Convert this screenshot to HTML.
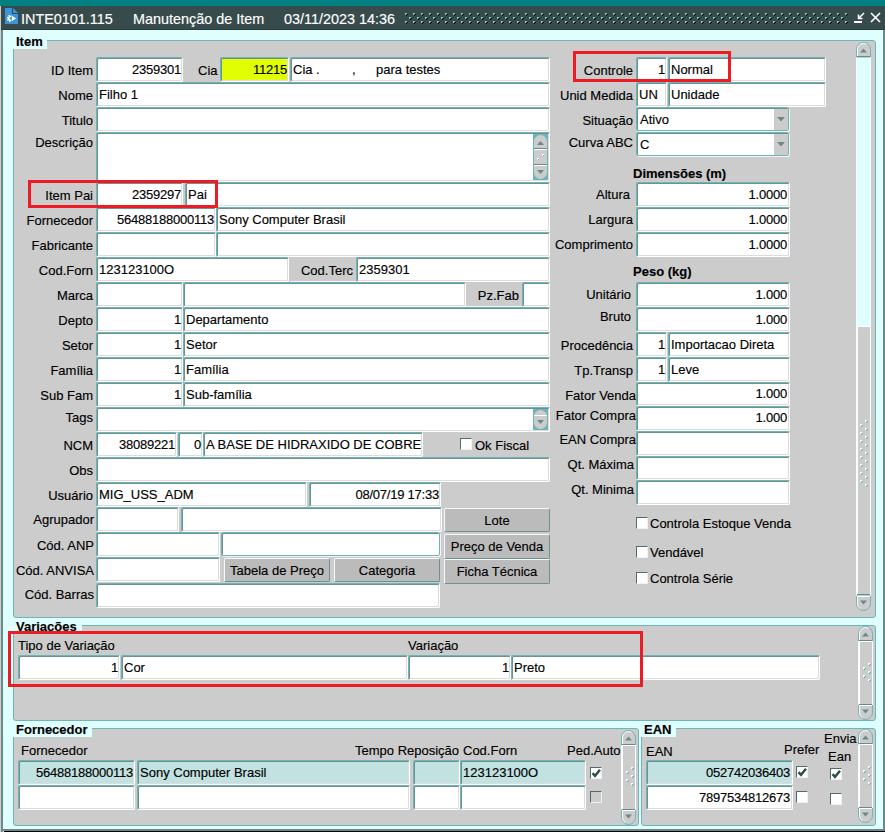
<!DOCTYPE html><html><head><meta charset="utf-8"><title>INTE0101.115</title><style>
html,body{margin:0;padding:0;}
body{width:885px;height:832px;overflow:hidden;background:#dfffff;font-family:"Liberation Sans",sans-serif;font-size:13px;color:#000;position:relative;-webkit-text-stroke:0.15px #000;}
div,span{box-sizing:border-box;}
.a{position:absolute;}
.f{position:absolute;background:#fff;border-top:1px solid #70b5b5;border-left:1px solid #70b5b5;border-right:1px solid #fff;border-bottom:1px solid #fff;border-radius:2px;height:25px;line-height:23px;padding:0 1px 0 2px;white-space:nowrap;overflow:hidden;box-shadow:inset 1px 1px 0 #6a9292, inset -1px -1px 0 #dcdcdc;}
.fb{border-right:1px solid #70b5b5;border-bottom:1px solid #70b5b5;box-shadow:inset 1px 1px 0 #6a9292, 1px 1px 0 #f4f4f4;}
.r{text-align:right;letter-spacing:-0.23px;}
.l{position:absolute;white-space:nowrap;line-height:16px;text-align:right;}
.ll{position:absolute;white-space:nowrap;line-height:16px;}
.b{font-weight:bold;}
.panel{position:absolute;background:#cccccc;border:1px solid #70b5b5;border-radius:3px;}
.plab{position:absolute;background:#dfffff;font-weight:bold;line-height:16px;padding:0 3px 0 3px;white-space:nowrap;}
.btn{position:absolute;background:#bbbbbb;border-top:1px solid #f8f8f8;border-left:1px solid #f8f8f8;border-right:1px solid #6a9292;border-bottom:1px solid #6a9292;border-radius:2px;height:24px;line-height:24px;text-align:center;white-space:nowrap;}
.cb{position:absolute;width:12px;height:12px;background:#fff;border:1px solid #4f6b6b;border-right-color:#f0f0f0;border-bottom-color:#f0f0f0;}
.red{position:absolute;border:3px solid #ed1c24;}
.sv{position:absolute;}
</style></head><body>
<div class="a" style="left:0;top:0;width:885px;height:6px;background:#008080"></div>
<div class="a" style="left:0;top:6px;width:885px;height:24px;background:#374b4c;border-bottom:1px solid #2c3c3c"></div>
<div class="a" style="left:0;top:6px;width:1px;height:826px;background:#d0d0d0"></div>
<div class="a" style="left:1px;top:30px;width:2px;height:802px;background:#6a8a8a"></div>
<div class="a" style="left:883px;top:30px;width:2px;height:802px;background:#6a8a8a"></div>
<div class="a" style="left:1px;top:829px;width:884px;height:2px;background:#6a8a8a"></div>
<div class="a" style="left:4px;top:831px;width:881px;height:1px;background:#000"></div>
<div class="a" style="left:21px;top:10px;font-size:14.4px;line-height:18px;color:#fff;-webkit-text-stroke:0.15px #fff;white-space:pre">INTE0101.115</div>
<div class="a" style="left:133px;top:10px;font-size:14.4px;line-height:18px;color:#fff;-webkit-text-stroke:0.15px #fff;white-space:pre">Manutenção de Item</div>
<div class="a" style="left:284px;top:10px;font-size:14.4px;line-height:18px;color:#fff;-webkit-text-stroke:0.15px #fff;white-space:pre">03/11/2023 14:36</div>
<svg class="sv" style="left:0;top:6px" width="885" height="24" viewBox="0 6 885 24" shape-rendering="crispEdges"><defs><pattern id="tp" x="405" y="13" width="8" height="8" patternUnits="userSpaceOnUse"><rect x="0" y="0" width="2" height="2" fill="#7ccccc"/><rect x="2" y="1" width="1" height="1" fill="#000"/><rect x="1" y="2" width="1" height="1" fill="#000"/><rect x="1" y="1" width="1" height="1" fill="#2a4a4a"/><rect x="4" y="4" width="2" height="2" fill="#7ccccc"/><rect x="6" y="5" width="1" height="1" fill="#000"/><rect x="5" y="6" width="1" height="1" fill="#000"/><rect x="5" y="5" width="1" height="1" fill="#2a4a4a"/></pattern></defs><rect x="405" y="13" width="443" height="11" fill="url(#tp)"/><g shape-rendering="auto"><defs><clipPath id="hg"><rect x="5" y="13" width="6.3" height="11"/></clipPath></defs><path d="M5 8H12V14H18V24H5z" fill="#3a96d8"/><path d="M13 8L18 13H13z" fill="#3a96d8"/><g clip-path="url(#hg)"><circle cx="10.6" cy="18.4" r="3.1" fill="none" stroke="#fff" stroke-width="1.4" stroke-dasharray="1.25 1.18"/><circle cx="10.6" cy="18.4" r="1.9" fill="none" stroke="#fff" stroke-width="1.5"/></g><path d="M12 15.8L16 18.4L12 21z" fill="#fff"/></g><g shape-rendering="auto" stroke="#fff" stroke-width="1.5" fill="none"><path d="M864 13L858.5 18.5M858.5 14.5V18.5H862.5"/><path d="M854 22H862" stroke-width="2"/><path d="M871 13L880 22M880 13L871 22" stroke-width="1.6"/></g></svg>
<div class="panel" style="left:13px;top:40px;width:863px;height:578px"></div>
<div class="plab" style="left:13px;top:33px;height:16px;width:34px;line-height:18px">Item</div>
<div class="l" style="right:792px;top:63px">ID Item</div>
<div class="f r" style="left:96px;top:57px;width:87px;height:25px;">2359301</div>
<div class="ll" style="left:198px;top:63px">Cia</div>
<div class="f r" style="left:220px;top:57px;width:69px;height:25px;background:#e1ff00;">11215</div>
<div class="f" style="left:290px;top:57px;width:260px;height:25px;"><span class="a" style="left:2px">Cia .</span><span class="a" style="left:61px">,</span><span class="a" style="left:85px">para testes</span></div>
<div class="l" style="right:792px;top:88px">Nome</div>
<div class="f" style="left:96px;top:82px;width:454px;height:25px;">Filho 1</div>
<div class="l" style="right:792px;top:113px">Titulo</div>
<div class="f" style="left:96px;top:107px;width:454px;height:25px;"></div>
<div class="l" style="right:792px;top:135px">Descrição</div>
<div class="f" style="left:96px;top:132px;width:454px;height:50px;"></div>
<div class="l" style="right:792px;top:188px">Item Pai</div>
<div class="f r" style="left:96px;top:182px;width:87px;height:25px;">2359297</div>
<div class="f" style="left:185px;top:182px;width:365px;height:25px;">Pai</div>
<div class="l" style="right:792px;top:213px">Fornecedor</div>
<div class="f r" style="left:96px;top:207px;width:120px;height:25px;">56488188000113</div>
<div class="f" style="left:216px;top:207px;width:334px;height:25px;">Sony Computer Brasil</div>
<div class="l" style="right:792px;top:238px">Fabricante</div>
<div class="f" style="left:96px;top:232px;width:120px;height:25px;"></div>
<div class="f" style="left:216px;top:232px;width:334px;height:25px;"></div>
<div class="l" style="right:792px;top:263px">Cod.Forn</div>
<div class="f" style="left:96px;top:257px;width:193px;height:25px;">123123100O</div>
<div class="a" style="left:290px;top:258px;width:66px;height:24px;border-bottom:1px solid #f4f4f4"></div>
<div class="l" style="right:532px;top:263px">Cod.Terc</div>
<div class="f" style="left:356px;top:257px;width:194px;height:25px;">2359301</div>
<div class="l" style="right:792px;top:288px">Marca</div>
<div class="f" style="left:96px;top:282px;width:87px;height:25px;"></div>
<div class="f" style="left:183px;top:282px;width:283px;height:25px;"></div>
<div class="a" style="left:466px;top:283px;width:56px;height:24px;border-bottom:1px solid #f4f4f4"></div>
<div class="l" style="right:366px;top:288px">Pz.Fab</div>
<div class="f" style="left:522px;top:282px;width:28px;height:25px;"></div>
<div class="l" style="right:792px;top:313px">Depto</div>
<div class="f r" style="left:96px;top:307px;width:87px;height:25px;">1</div>
<div class="f" style="left:183px;top:307px;width:367px;height:25px;">Departamento</div>
<div class="l" style="right:792px;top:338px">Setor</div>
<div class="f r" style="left:96px;top:332px;width:87px;height:25px;">1</div>
<div class="f" style="left:183px;top:332px;width:367px;height:25px;">Setor</div>
<div class="l" style="right:792px;top:363px">Família</div>
<div class="f r" style="left:96px;top:357px;width:87px;height:25px;">1</div>
<div class="f" style="left:183px;top:357px;width:367px;height:25px;">Família</div>
<div class="l" style="right:792px;top:388px">Sub Fam</div>
<div class="f r" style="left:96px;top:382px;width:87px;height:25px;">1</div>
<div class="f" style="left:183px;top:382px;width:367px;height:25px;">Sub-família</div>
<div class="l" style="right:792px;top:410px">Tags</div>
<div class="f" style="left:96px;top:407px;width:454px;height:25px;"></div>
<div class="l" style="right:792px;top:438px">NCM</div>
<div class="f r" style="left:96px;top:432px;width:81px;height:25px;">38089221</div>
<div class="f r" style="left:178px;top:432px;width:25px;height:25px;">0</div>
<div class="f" style="left:203px;top:432px;width:220px;height:25px;">A BASE DE HIDRAXIDO DE COBRE</div>
<div class="cb" style="left:460px;top:438px"></div>
<div class="ll" style="left:475px;top:438px">Ok Fiscal</div>
<div class="l" style="right:792px;top:463px">Obs</div>
<div class="f" style="left:96px;top:457px;width:454px;height:25px;"></div>
<div class="l" style="right:792px;top:488px">Usuário</div>
<div class="f" style="left:96px;top:482px;width:211px;height:25px;">MIG_USS_ADM</div>
<div class="f r" style="left:309px;top:482px;width:132px;height:25px;">08/07/19 17:33</div>
<div class="l" style="right:791px;top:512px">Agrupador</div>
<div class="f" style="left:96px;top:507px;width:83px;height:25px;"></div>
<div class="f" style="left:181px;top:507px;width:261px;height:25px;"></div>
<div class="l" style="right:791px;top:538px">Cód. ANP</div>
<div class="f" style="left:96px;top:532px;width:124px;height:25px;"></div>
<div class="f fb" style="left:221px;top:532px;width:219px;height:24px;"></div>
<div class="l" style="right:791px;top:563px">Cód. ANVISA</div>
<div class="f" style="left:96px;top:557px;width:124px;height:25px;"></div>
<div class="l" style="right:791px;top:587px">Cód. Barras</div>
<div class="f" style="left:96px;top:583px;width:344px;height:25px;"></div>
<div class="btn" style="left:444px;top:508px;width:106px;height:24px;line-height:24px">Lote</div>
<div class="btn" style="left:444px;top:534px;width:106px;height:25px;line-height:23px">Preço de Venda</div>
<div class="btn" style="left:444px;top:559px;width:106px;height:25px;line-height:23px">Ficha Técnica</div>
<div class="btn" style="left:224px;top:558px;width:106px;height:24px;line-height:24px">Tabela de Preço</div>
<div class="btn" style="left:334px;top:558px;width:106px;height:24px;line-height:24px">Categoria</div>
<svg class="sv" style="left:533px;top:134px" width="15" height="46" viewBox="0 0 15 46"><rect width="15" height="46" fill="#70b5b5"/><rect x="1" y="1" width="13" height="44" rx="6.5" fill="#cccccc"/><rect x="1" y="14" width="13" height="1" fill="#6a8a8a"/><rect x="1" y="15" width="13" height="1" fill="#fff"/><rect x="1" y="30" width="13" height="1" fill="#6a8a8a"/><rect x="1" y="31" width="13" height="1" fill="#fff"/><path d="M4 11h7L7.5 7z" fill="#6a8a8a"/><path d="M4 36h7L7.5 40z" fill="#6a8a8a"/><rect x="9" y="20" width="2" height="2" fill="#fff"/><rect x="10" y="21" width="1" height="1" fill="#5fa8a8"/><rect x="4" y="24" width="2" height="2" fill="#fff"/><rect x="5" y="25" width="1" height="1" fill="#5fa8a8"/></svg>
<svg class="sv" style="left:533px;top:409px" width="15" height="21" viewBox="0 0 15 21"><rect width="15" height="21" fill="#70b5b5"/><rect x="1" y="1" width="13" height="19" rx="6.5" fill="#cccccc"/><rect x="1" y="6" width="13" height="1" fill="#fff"/><path d="M4 11h7L7.5 15z" fill="#6a8a8a"/></svg>
<div class="l" style="right:252px;top:63px">Controle</div>
<div class="f r" style="left:636px;top:57px;width:31px;height:25px;">1</div>
<div class="f" style="left:668px;top:57px;width:158px;height:25px;">Normal</div>
<div class="l" style="right:252px;top:88px">Unid Medida</div>
<div class="f" style="left:636px;top:82px;width:31px;height:25px;">UN</div>
<div class="f" style="left:668px;top:82px;width:158px;height:25px;">Unidade</div>
<div class="l" style="right:252px;top:113px">Situação</div>
<div class="f fb" style="left:636px;top:107px;width:153px;height:24px;"><span style="position:relative;top:0px;left:1px">Ativo</span></div>
<svg class="sv" style="left:774px;top:109px" width="14" height="21" viewBox="0 0 14 21"><rect width="14" height="21" fill="#cccccc"/><path d="M3 8h8L7 12.5z" fill="#6a8a8a"/></svg>
<div class="l" style="right:252px;top:135px">Curva ABC</div>
<div class="f fb" style="left:636px;top:132px;width:153px;height:24px;"><span style="position:relative;top:0px;left:1px">C</span></div>
<svg class="sv" style="left:774px;top:134px" width="14" height="21" viewBox="0 0 14 21"><rect width="14" height="21" fill="#cccccc"/><path d="M3 8h8L7 12.5z" fill="#6a8a8a"/></svg>
<div class="ll b" style="left:633px;top:166px">Dimensões (m)</div>
<div class="l" style="right:255px;top:187px">Altura</div>
<div class="f r" style="left:636px;top:182px;width:154px;height:25px;padding-right:2px;">1.0000</div>
<div class="l" style="right:252px;top:212px">Largura</div>
<div class="f r" style="left:636px;top:207px;width:154px;height:25px;padding-right:2px;">1.0000</div>
<div class="l" style="right:252px;top:237px">Comprimento</div>
<div class="f r" style="left:636px;top:232px;width:154px;height:25px;padding-right:2px;">1.0000</div>
<div class="ll b" style="left:633px;top:264px">Peso (kg)</div>
<div class="l" style="right:254px;top:287px">Unitário</div>
<div class="f r" style="left:636px;top:282px;width:154px;height:25px;padding-right:2px;">1.000</div>
<div class="l" style="right:254px;top:309px">Bruto</div>
<div class="f r" style="left:636px;top:307px;width:154px;height:25px;padding-right:2px;">1.000</div>
<div class="l" style="right:252px;top:338px">Procedência</div>
<div class="f r" style="left:636px;top:332px;width:31px;height:25px;">1</div>
<div class="f" style="left:668px;top:332px;width:122px;height:25px;">Importacao Direta</div>
<div class="l" style="right:252px;top:363px">Tp.Transp</div>
<div class="f r" style="left:636px;top:357px;width:31px;height:25px;">1</div>
<div class="f" style="left:668px;top:357px;width:122px;height:25px;">Leve</div>
<div class="l" style="right:249px;top:388px">Fator Venda</div>
<div class="f r" style="left:636px;top:382px;width:154px;height:24px;padding-right:2px;line-height:21px;">1.000</div>
<div class="l" style="right:249px;top:408px">Fator Compra</div>
<div class="f r" style="left:636px;top:406px;width:154px;height:25px;padding-right:2px;line-height:21px;">1.000</div>
<div class="l" style="right:249px;top:432px">EAN Compra</div>
<div class="f" style="left:636px;top:431px;width:154px;height:25px;"></div>
<div class="l" style="right:251px;top:457px">Qt. Máxima</div>
<div class="f" style="left:636px;top:456px;width:154px;height:24px;"></div>
<div class="l" style="right:251px;top:482px">Qt. Minima</div>
<div class="f" style="left:636px;top:480px;width:154px;height:25px;"></div>
<div class="cb" style="left:636px;top:517px"></div>
<div class="ll" style="left:650px;top:516px">Controla Estoque Venda</div>
<div class="cb" style="left:636px;top:546px"></div>
<div class="ll" style="left:650px;top:545px">Vendável</div>
<div class="cb" style="left:636px;top:572px"></div>
<div class="ll" style="left:650px;top:571px">Controla Série</div>
<svg class="sv" style="left:856px;top:42px" width="16" height="569" viewBox="0 0 16 569"><rect x="0" y="8" width="15" height="553" fill="#dfffff"/><rect x="0" y="8" width="1" height="553" fill="#f4ffff"/><rect x="14" y="8" width="1" height="553" fill="#f4ffff"/><path d="M0.5 15V7.5a7 7 0 0 1 14 0V15z" fill="#cccccc" stroke="#70b5b5" stroke-width="1"/><path d="M1.5 14V7.5a6 6 0 0 1 9-5.2" fill="none" stroke="#fff" stroke-width="1"/><rect x="1" y="14" width="13" height="1" fill="#6a8a8a"/><path d="M4 10.5h7L7.5 6.5z" fill="#6a8a8a"/><path d="M0.5 554V561.5a7 7 0 0 0 14 0V554z" fill="#cccccc" stroke="#70b5b5" stroke-width="1"/><path d="M1.5 555V561.5a6 6 0 0 0 3 5.2" fill="none" stroke="#fff" stroke-width="1"/><rect x="1" y="554" width="13" height="1" fill="#fff"/><path d="M4 558.5h7L7.5 562.5z" fill="#6a8a8a"/><rect x="1" y="284" width="14" height="269" fill="#cccccc"/><rect x="1" y="284" width="13" height="1" fill="#fff"/><rect x="1" y="284" width="1" height="269" fill="#fff"/><rect x="1" y="552" width="14" height="1" fill="#6a8a8a"/><rect x="14" y="284" width="1" height="269" fill="#f4ffff"/><rect x="9" y="378" width="2" height="2" fill="#fff"/><rect x="11" y="379" width="1" height="1" fill="#5fb0b0"/><rect x="10" y="380" width="1" height="1" fill="#5fb0b0"/><rect x="10" y="379" width="1" height="1" fill="#b0d8d8"/><rect x="9" y="386" width="2" height="2" fill="#fff"/><rect x="11" y="387" width="1" height="1" fill="#5fb0b0"/><rect x="10" y="388" width="1" height="1" fill="#5fb0b0"/><rect x="10" y="387" width="1" height="1" fill="#b0d8d8"/><rect x="9" y="394" width="2" height="2" fill="#fff"/><rect x="11" y="395" width="1" height="1" fill="#5fb0b0"/><rect x="10" y="396" width="1" height="1" fill="#5fb0b0"/><rect x="10" y="395" width="1" height="1" fill="#b0d8d8"/><rect x="9" y="402" width="2" height="2" fill="#fff"/><rect x="11" y="403" width="1" height="1" fill="#5fb0b0"/><rect x="10" y="404" width="1" height="1" fill="#5fb0b0"/><rect x="10" y="403" width="1" height="1" fill="#b0d8d8"/><rect x="9" y="410" width="2" height="2" fill="#fff"/><rect x="11" y="411" width="1" height="1" fill="#5fb0b0"/><rect x="10" y="412" width="1" height="1" fill="#5fb0b0"/><rect x="10" y="411" width="1" height="1" fill="#b0d8d8"/><rect x="9" y="418" width="2" height="2" fill="#fff"/><rect x="11" y="419" width="1" height="1" fill="#5fb0b0"/><rect x="10" y="420" width="1" height="1" fill="#5fb0b0"/><rect x="10" y="419" width="1" height="1" fill="#b0d8d8"/><rect x="9" y="426" width="2" height="2" fill="#fff"/><rect x="11" y="427" width="1" height="1" fill="#5fb0b0"/><rect x="10" y="428" width="1" height="1" fill="#5fb0b0"/><rect x="10" y="427" width="1" height="1" fill="#b0d8d8"/><rect x="9" y="434" width="2" height="2" fill="#fff"/><rect x="11" y="435" width="1" height="1" fill="#5fb0b0"/><rect x="10" y="436" width="1" height="1" fill="#5fb0b0"/><rect x="10" y="435" width="1" height="1" fill="#b0d8d8"/><rect x="9" y="442" width="2" height="2" fill="#fff"/><rect x="11" y="443" width="1" height="1" fill="#5fb0b0"/><rect x="10" y="444" width="1" height="1" fill="#5fb0b0"/><rect x="10" y="443" width="1" height="1" fill="#b0d8d8"/><rect x="4" y="382" width="2" height="2" fill="#fff"/><rect x="6" y="383" width="1" height="1" fill="#5fb0b0"/><rect x="5" y="384" width="1" height="1" fill="#5fb0b0"/><rect x="5" y="383" width="1" height="1" fill="#b0d8d8"/><rect x="4" y="390" width="2" height="2" fill="#fff"/><rect x="6" y="391" width="1" height="1" fill="#5fb0b0"/><rect x="5" y="392" width="1" height="1" fill="#5fb0b0"/><rect x="5" y="391" width="1" height="1" fill="#b0d8d8"/><rect x="4" y="398" width="2" height="2" fill="#fff"/><rect x="6" y="399" width="1" height="1" fill="#5fb0b0"/><rect x="5" y="400" width="1" height="1" fill="#5fb0b0"/><rect x="5" y="399" width="1" height="1" fill="#b0d8d8"/><rect x="4" y="406" width="2" height="2" fill="#fff"/><rect x="6" y="407" width="1" height="1" fill="#5fb0b0"/><rect x="5" y="408" width="1" height="1" fill="#5fb0b0"/><rect x="5" y="407" width="1" height="1" fill="#b0d8d8"/><rect x="4" y="414" width="2" height="2" fill="#fff"/><rect x="6" y="415" width="1" height="1" fill="#5fb0b0"/><rect x="5" y="416" width="1" height="1" fill="#5fb0b0"/><rect x="5" y="415" width="1" height="1" fill="#b0d8d8"/><rect x="4" y="422" width="2" height="2" fill="#fff"/><rect x="6" y="423" width="1" height="1" fill="#5fb0b0"/><rect x="5" y="424" width="1" height="1" fill="#5fb0b0"/><rect x="5" y="423" width="1" height="1" fill="#b0d8d8"/><rect x="4" y="430" width="2" height="2" fill="#fff"/><rect x="6" y="431" width="1" height="1" fill="#5fb0b0"/><rect x="5" y="432" width="1" height="1" fill="#5fb0b0"/><rect x="5" y="431" width="1" height="1" fill="#b0d8d8"/><rect x="4" y="438" width="2" height="2" fill="#fff"/><rect x="6" y="439" width="1" height="1" fill="#5fb0b0"/><rect x="5" y="440" width="1" height="1" fill="#5fb0b0"/><rect x="5" y="439" width="1" height="1" fill="#b0d8d8"/></svg>
<div class="panel" style="left:13px;top:625px;width:863px;height:96px"></div>
<div class="plab" style="left:13px;top:619px;height:15px;width:69px">Variações</div>
<div class="ll" style="left:18px;top:638px">Tipo de Variação</div>
<div class="ll" style="left:408px;top:638px">Variação</div>
<div class="f r" style="left:18px;top:655px;width:102px;height:25px;">1</div>
<div class="f" style="left:121px;top:655px;width:287px;height:25px;">Cor</div>
<div class="f r" style="left:408px;top:655px;width:103px;height:25px;">1</div>
<div class="f" style="left:511px;top:655px;width:309px;height:25px;">Preto</div>
<svg class="sv" style="left:858px;top:626px" width="16" height="94" viewBox="0 0 16 94"><rect x="0" y="8" width="15" height="78" fill="#dfffff"/><rect x="0" y="8" width="1" height="78" fill="#f4ffff"/><rect x="14" y="8" width="1" height="78" fill="#f4ffff"/><path d="M0.5 15V7.5a7 7 0 0 1 14 0V15z" fill="#cccccc" stroke="#70b5b5" stroke-width="1"/><path d="M1.5 14V7.5a6 6 0 0 1 9-5.2" fill="none" stroke="#fff" stroke-width="1"/><rect x="1" y="14" width="13" height="1" fill="#6a8a8a"/><path d="M4 10.5h7L7.5 6.5z" fill="#6a8a8a"/><path d="M0.5 79V86.5a7 7 0 0 0 14 0V79z" fill="#cccccc" stroke="#70b5b5" stroke-width="1"/><path d="M1.5 80V86.5a6 6 0 0 0 3 5.2" fill="none" stroke="#fff" stroke-width="1"/><rect x="1" y="79" width="13" height="1" fill="#fff"/><path d="M4 83.5h7L7.5 87.5z" fill="#6a8a8a"/><rect x="1" y="15" width="14" height="64" fill="#cccccc"/><rect x="1" y="15" width="13" height="1" fill="#fff"/><rect x="1" y="15" width="1" height="64" fill="#fff"/><rect x="1" y="78" width="14" height="1" fill="#6a8a8a"/><rect x="14" y="15" width="1" height="64" fill="#f4ffff"/><rect x="10" y="37" width="2" height="2" fill="#fff"/><rect x="12" y="38" width="1" height="1" fill="#5fb0b0"/><rect x="11" y="39" width="1" height="1" fill="#5fb0b0"/><rect x="11" y="38" width="1" height="1" fill="#b0d8d8"/><rect x="5" y="41" width="2" height="2" fill="#fff"/><rect x="7" y="42" width="1" height="1" fill="#5fb0b0"/><rect x="6" y="43" width="1" height="1" fill="#5fb0b0"/><rect x="6" y="42" width="1" height="1" fill="#b0d8d8"/><rect x="10" y="45" width="2" height="2" fill="#fff"/><rect x="12" y="46" width="1" height="1" fill="#5fb0b0"/><rect x="11" y="47" width="1" height="1" fill="#5fb0b0"/><rect x="11" y="46" width="1" height="1" fill="#b0d8d8"/><rect x="5" y="49" width="2" height="2" fill="#fff"/><rect x="7" y="50" width="1" height="1" fill="#5fb0b0"/><rect x="6" y="51" width="1" height="1" fill="#5fb0b0"/><rect x="6" y="50" width="1" height="1" fill="#b0d8d8"/><rect x="10" y="53" width="2" height="2" fill="#fff"/><rect x="12" y="54" width="1" height="1" fill="#5fb0b0"/><rect x="11" y="55" width="1" height="1" fill="#5fb0b0"/><rect x="11" y="54" width="1" height="1" fill="#b0d8d8"/></svg>
<div class="panel" style="left:13px;top:728px;width:626px;height:98px"></div>
<div class="plab" style="left:13px;top:722px;height:15px;width:79px">Fornecedor</div>
<div class="ll" style="left:21px;top:743px">Fornecedor</div>
<div class="ll" style="left:355px;top:743px">Tempo Reposição</div>
<div class="ll" style="left:463px;top:743px">Cod.Forn</div>
<div class="ll" style="left:567px;top:743px">Ped.Auto</div>
<div class="f r" style="left:18px;top:760px;width:117px;height:25px;background:#c2e1e1;">56488188000113</div>
<div class="f" style="left:137px;top:760px;width:273px;height:25px;background:#c2e1e1;">Sony Computer Brasil</div>
<div class="f" style="left:413px;top:760px;width:47px;height:25px;background:#c2e1e1;"></div>
<div class="f" style="left:460px;top:760px;width:126px;height:25px;background:#c2e1e1;">123123100O</div>
<div class="f" style="left:18px;top:785px;width:117px;height:25px;"></div>
<div class="f" style="left:137px;top:785px;width:273px;height:25px;"></div>
<div class="f" style="left:413px;top:785px;width:47px;height:25px;"></div>
<div class="f" style="left:460px;top:785px;width:126px;height:25px;"></div>
<div class="cb" style="left:590px;top:767px;background:#fff"><svg width="10" height="10" viewBox="0 0 10 10" style="position:absolute;left:0;top:0"><path d="M1.5 5.2L4 7.8L9 1.8" fill="none" stroke="#2f4f4f" stroke-width="2.5"/></svg></div>
<div class="cb" style="left:590px;top:791px;background:#ccc"></div>
<svg class="sv" style="left:621px;top:730px" width="16" height="95" viewBox="0 0 16 95"><rect x="0" y="8" width="15" height="79" fill="#dfffff"/><rect x="0" y="8" width="1" height="79" fill="#f4ffff"/><rect x="14" y="8" width="1" height="79" fill="#f4ffff"/><path d="M0.5 15V7.5a7 7 0 0 1 14 0V15z" fill="#cccccc" stroke="#70b5b5" stroke-width="1"/><path d="M1.5 14V7.5a6 6 0 0 1 9-5.2" fill="none" stroke="#fff" stroke-width="1"/><rect x="1" y="14" width="13" height="1" fill="#6a8a8a"/><path d="M4 10.5h7L7.5 6.5z" fill="#6a8a8a"/><path d="M0.5 80V87.5a7 7 0 0 0 14 0V80z" fill="#cccccc" stroke="#70b5b5" stroke-width="1"/><path d="M1.5 81V87.5a6 6 0 0 0 3 5.2" fill="none" stroke="#fff" stroke-width="1"/><rect x="1" y="80" width="13" height="1" fill="#fff"/><path d="M4 84.5h7L7.5 88.5z" fill="#6a8a8a"/><rect x="1" y="15" width="14" height="65" fill="#cccccc"/><rect x="1" y="15" width="13" height="1" fill="#fff"/><rect x="1" y="15" width="1" height="65" fill="#fff"/><rect x="1" y="79" width="14" height="1" fill="#6a8a8a"/><rect x="14" y="15" width="1" height="65" fill="#f4ffff"/><rect x="10" y="37" width="2" height="2" fill="#fff"/><rect x="12" y="38" width="1" height="1" fill="#5fb0b0"/><rect x="11" y="39" width="1" height="1" fill="#5fb0b0"/><rect x="11" y="38" width="1" height="1" fill="#b0d8d8"/><rect x="5" y="41" width="2" height="2" fill="#fff"/><rect x="7" y="42" width="1" height="1" fill="#5fb0b0"/><rect x="6" y="43" width="1" height="1" fill="#5fb0b0"/><rect x="6" y="42" width="1" height="1" fill="#b0d8d8"/><rect x="10" y="45" width="2" height="2" fill="#fff"/><rect x="12" y="46" width="1" height="1" fill="#5fb0b0"/><rect x="11" y="47" width="1" height="1" fill="#5fb0b0"/><rect x="11" y="46" width="1" height="1" fill="#b0d8d8"/><rect x="5" y="49" width="2" height="2" fill="#fff"/><rect x="7" y="50" width="1" height="1" fill="#5fb0b0"/><rect x="6" y="51" width="1" height="1" fill="#5fb0b0"/><rect x="6" y="50" width="1" height="1" fill="#b0d8d8"/><rect x="10" y="53" width="2" height="2" fill="#fff"/><rect x="12" y="54" width="1" height="1" fill="#5fb0b0"/><rect x="11" y="55" width="1" height="1" fill="#5fb0b0"/><rect x="11" y="54" width="1" height="1" fill="#b0d8d8"/></svg>
<div class="panel" style="left:641px;top:728px;width:235px;height:98px"></div>
<div class="plab" style="left:641px;top:722px;height:15px;width:35px">EAN</div>
<div class="ll" style="left:646px;top:744px">EAN</div>
<div class="ll" style="left:784px;top:742px">Prefer</div>
<div class="ll" style="left:824px;top:731px">Envia</div>
<div class="ll" style="left:828px;top:749px">Ean</div>
<div class="f r" style="left:646px;top:760px;width:147px;height:25px;background:#c2e1e1;padding-right:2px;">052742036403</div>
<div class="f r" style="left:646px;top:785px;width:147px;height:25px;padding-right:2px;">7897534812673</div>
<div class="cb" style="left:796px;top:766px;background:#fff"><svg width="10" height="10" viewBox="0 0 10 10" style="position:absolute;left:0;top:0"><path d="M1.5 5.2L4 7.8L9 1.8" fill="none" stroke="#2f4f4f" stroke-width="2.5"/></svg></div>
<div class="cb" style="left:796px;top:791px;background:#fff"></div>
<div class="cb" style="left:830px;top:768px;background:#fff"><svg width="10" height="10" viewBox="0 0 10 10" style="position:absolute;left:0;top:0"><path d="M1.5 5.2L4 7.8L9 1.8" fill="none" stroke="#2f4f4f" stroke-width="2.5"/></svg></div>
<div class="cb" style="left:830px;top:793px;background:#fff"></div>
<svg class="sv" style="left:858px;top:729px" width="16" height="94" viewBox="0 0 16 94"><rect x="0" y="8" width="15" height="78" fill="#dfffff"/><rect x="0" y="8" width="1" height="78" fill="#f4ffff"/><rect x="14" y="8" width="1" height="78" fill="#f4ffff"/><path d="M0.5 15V7.5a7 7 0 0 1 14 0V15z" fill="#cccccc" stroke="#70b5b5" stroke-width="1"/><path d="M1.5 14V7.5a6 6 0 0 1 9-5.2" fill="none" stroke="#fff" stroke-width="1"/><rect x="1" y="14" width="13" height="1" fill="#6a8a8a"/><path d="M4 10.5h7L7.5 6.5z" fill="#6a8a8a"/><path d="M0.5 79V86.5a7 7 0 0 0 14 0V79z" fill="#cccccc" stroke="#70b5b5" stroke-width="1"/><path d="M1.5 80V86.5a6 6 0 0 0 3 5.2" fill="none" stroke="#fff" stroke-width="1"/><rect x="1" y="79" width="13" height="1" fill="#fff"/><path d="M4 83.5h7L7.5 87.5z" fill="#6a8a8a"/><rect x="1" y="15" width="14" height="64" fill="#cccccc"/><rect x="1" y="15" width="13" height="1" fill="#fff"/><rect x="1" y="15" width="1" height="64" fill="#fff"/><rect x="1" y="78" width="14" height="1" fill="#6a8a8a"/><rect x="14" y="15" width="1" height="64" fill="#f4ffff"/><rect x="10" y="37" width="2" height="2" fill="#fff"/><rect x="12" y="38" width="1" height="1" fill="#5fb0b0"/><rect x="11" y="39" width="1" height="1" fill="#5fb0b0"/><rect x="11" y="38" width="1" height="1" fill="#b0d8d8"/><rect x="5" y="41" width="2" height="2" fill="#fff"/><rect x="7" y="42" width="1" height="1" fill="#5fb0b0"/><rect x="6" y="43" width="1" height="1" fill="#5fb0b0"/><rect x="6" y="42" width="1" height="1" fill="#b0d8d8"/><rect x="10" y="45" width="2" height="2" fill="#fff"/><rect x="12" y="46" width="1" height="1" fill="#5fb0b0"/><rect x="11" y="47" width="1" height="1" fill="#5fb0b0"/><rect x="11" y="46" width="1" height="1" fill="#b0d8d8"/><rect x="5" y="49" width="2" height="2" fill="#fff"/><rect x="7" y="50" width="1" height="1" fill="#5fb0b0"/><rect x="6" y="51" width="1" height="1" fill="#5fb0b0"/><rect x="6" y="50" width="1" height="1" fill="#b0d8d8"/><rect x="10" y="53" width="2" height="2" fill="#fff"/><rect x="12" y="54" width="1" height="1" fill="#5fb0b0"/><rect x="11" y="55" width="1" height="1" fill="#5fb0b0"/><rect x="11" y="54" width="1" height="1" fill="#b0d8d8"/></svg>
<div class="red" style="left:573px;top:51px;width:158px;height:31px"></div>
<div class="red" style="left:28px;top:180px;width:190px;height:28px"></div>
<div class="red" style="left:8px;top:631px;width:635px;height:56px"></div>
</body></html>
